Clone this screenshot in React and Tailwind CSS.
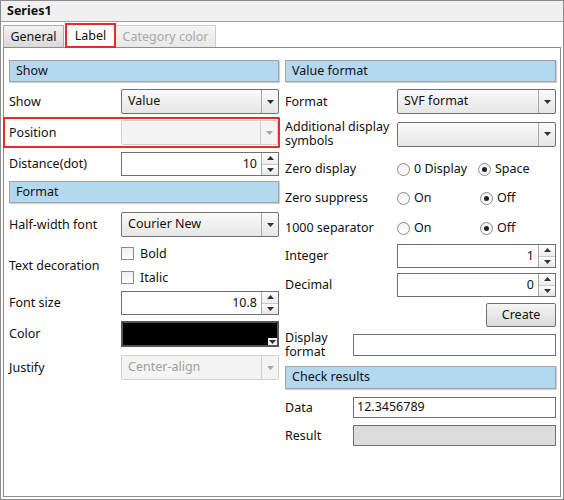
import { useState } from "react";

const font = { fontFamily: '"Noto Sans", "Open Sans", sans-serif' };

// small triangle used on dropdowns and spinners
function Arrow({ up = false, disabled = false }) {
  return (
    <svg width="7" height="4" viewBox="0 0 7 4" className="block">
      <polygon
        points={up ? "0,4 7,4 3.5,0" : "0,0 7,0 3.5,4"}
        fill={disabled ? "#a8a8a8" : "#333"}
      />
    </svg>
  );
}

function Select({ value = "", disabled = false, className = "" }) {
  return (
    <div
      className={`flex h-[25px] flex-1 rounded-[2px] border ${
        disabled
          ? "border-[#d0d0d0] bg-[#f4f4f4] text-[#a0a0a0]"
          : "border-[#707070] bg-gradient-to-b from-[#fafafa] to-[#e6e6e6] text-[#111]"
      } ${className}`}
    >
      <div className="flex flex-1 items-center pl-[6px] text-[12.5px]">{value}</div>
      <div
        className={`flex w-[17px] items-center justify-center border-l ${
          disabled ? "border-[#d0d0d0]" : "border-[#a8a8a8]"
        }`}
      >
        <Arrow disabled={disabled} />
      </div>
    </div>
  );
}

function Spin({ value }) {
  return (
    <div className="flex h-[24px] flex-1 border border-[#707070] bg-white">
      <div className="flex flex-1 items-center justify-end pr-[4px] text-[12.5px] text-[#111]">
        {value}
      </div>
      <div className="flex w-[17px] flex-col border-l border-[#a8a8a8]">
        <div className="flex flex-1 items-center justify-center bg-gradient-to-b from-white to-[#ededed]">
          <Arrow up />
        </div>
        <div className="flex flex-1 items-center justify-center border-t border-[#c8c8c8] bg-gradient-to-b from-white to-[#e6e6e6]">
          <Arrow />
        </div>
      </div>
    </div>
  );
}

function Header({ children, className = "" }) {
  return (
    <div
      className={`flex h-[22px] items-center border border-[#a3a3a3] bg-[#b4d8ef] pl-[6px] text-[12.5px] text-[#111] shadow-[1px_1px_1px_rgba(0,0,0,0.18)] ${className}`}
    >
      {children}
    </div>
  );
}

function Row({ label, children, className = "", labelWidth = "w-[112px]" }) {
  return (
    <div className={`flex items-center ${className}`}>
      <div className={`${labelWidth} shrink-0 text-[12.5px] leading-[14px] text-[#111]`}>{label}</div>
      {children}
    </div>
  );
}

function Radio({ label, checked, width }) {
  return (
    <div className={`flex items-center gap-[4px] ${width}`}>
      <div className="flex h-[13px] w-[13px] items-center justify-center rounded-full border border-[#8a8a8a] bg-gradient-to-b from-[#f0f0f0] to-white">
        {checked && <div className="h-[5px] w-[5px] rounded-full bg-[#222]" />}
      </div>
      <span className="text-[12.5px] text-[#111]">{label}</span>
    </div>
  );
}

function Check({ label }) {
  return (
    <div className="flex h-[13px] items-center gap-[6px]">
      <div className="h-[13px] w-[13px] border border-[#8a8a8a] bg-gradient-to-b from-[#f0f0f0] to-white" />
      <span className="text-[12.5px] leading-[13px] text-[#111]">{label}</span>
    </div>
  );
}

export default function App() {
  const [tab] = useState("Label");

  return (
    <div style={font} className="flex h-[500px] w-[564px] flex-col border border-[#8c8c8c] bg-white">
      {/* title bar */}
      <div className="flex h-[21px] items-center border-b border-[#a0a0a0] bg-[#f0f0f0] pl-[6px] text-[12.5px] font-bold text-[#111]">
        Series1
      </div>

      {/* tabs */}
      <div className="mt-[1px] flex h-[24px] items-end pl-[2px]">
        <div className="flex h-[22px] w-[61px] items-center justify-center border border-b-0 border-[#acacac] bg-gradient-to-b from-[#f2f2f2] to-[#d9d9d9] pt-[1px] text-[12.5px] text-[#111]">
          General
        </div>
        <div
          className={`z-10 -mb-px ml-[1px] flex h-[25px] w-[51px] items-center justify-center border-2 border-[#e82a2a] pt-[2px] text-[12.5px] text-[#111] ${
            tab === "Label" ? "bg-white" : "bg-[#f0f0f0]"
          }`}
        >
          Label
        </div>
        <div className="flex h-[22px] w-[100px] items-center justify-center border border-b-0 border-l-0 border-[#cfcfcf] bg-gradient-to-b from-[#f4f4f4] to-[#e8e8e8] pt-[1px] text-[12.5px] text-[#a8a8a8]">
          Category color
        </div>
      </div>

      {/* panel */}
      <div className="mx-[2px] mb-[2px] flex flex-1 gap-[6px] border border-[#8c8c8c] pl-[5px] pr-[4px] pt-[12px]">
        {/* left column */}
        <div className="flex w-[270px] flex-col">
          <Header>Show</Header>
          <Row label="Show" className="mt-[7px]">
            <Select value="Value" />
          </Row>
          <Row
            label="Position"
            className="-ml-[6px] -mr-[1px] mt-[3px] h-[31px] rounded-[1px] border-2 border-[#e82a2a] pl-[4px]"
          >
            <Select disabled />
          </Row>
          <Row label="Distance(dot)" className="mt-[4px]">
            <Spin value="10" />
          </Row>
          <Header className="mt-[5px]">Format</Header>
          <Row label="Half-width font" className="mt-[9px]">
            <Select value="Courier New" />
          </Row>
          <Row label="Text decoration" className="mt-[10px]">
            <div className="flex flex-col gap-[11px]">
              <Check label="Bold" />
              <Check label="Italic" />
            </div>
          </Row>
          <Row label="Font size" className="mt-[7px]">
            <Spin value="10.8" />
          </Row>
          <Row label="Color" className="mt-[6px]">
            <div className="relative h-[26px] flex-1 border-2 border-[#555] bg-black">
              <div className="absolute bottom-0 right-0 flex h-[7px] w-[9px] items-center justify-center bg-[#f0f0f0]">
                <Arrow />
              </div>
            </div>
          </Row>
          <Row label="Justify" className="mt-[8px]">
            <Select value="Center-align" disabled />
          </Row>
        </div>

        {/* right column */}
        <div className="flex w-[271px] flex-col">
          <Header>Value format</Header>
          <Row label="Format" className="mt-[7px]">
            <Select value="SVF format" />
          </Row>
          <Row label={<>Additional display<br />symbols</>} className="mt-[6px]">
            <Select />
          </Row>
          <Row label="Zero display" className="mt-[10px] h-[22px]">
            <Radio label="0 Display" width="w-[81px]" />
            <Radio label="Space" checked />
          </Row>
          <Row label="Zero suppress" className="mt-[7px] h-[22px]">
            <Radio label="On" width="w-[83px]" />
            <Radio label="Off" checked />
          </Row>
          <Row label="1000 separator" className="mt-[8px] h-[22px]">
            <Radio label="On" width="w-[83px]" />
            <Radio label="Off" checked />
          </Row>
          <Row label="Integer" className="mt-[5px]">
            <Spin value="1" />
          </Row>
          <Row label="Decimal" className="mt-[5px]">
            <Spin value="0" />
          </Row>
          <div className="mt-[6px] flex justify-end">
            <button className="h-[24px] w-[70px] rounded-[2px] border border-[#707070] bg-gradient-to-b from-[#f6f6f6] to-[#dadada] text-[12.5px] text-[#111]">
              Create
            </button>
          </div>
          <Row label={<>Display<br />format</>} labelWidth="w-[68px]" className="mt-[4px]">
            <div className="h-[22px] flex-1 border border-[#707070] bg-white" />
          </Row>
          <Header className="mt-[7px] h-[23px]">Check results</Header>
          <Row label="Data" labelWidth="w-[68px]" className="mt-[8px]">
            <div className="flex h-[21px] flex-1 items-center border border-[#707070] bg-white pl-[3px] text-[12.5px] text-[#111]">
              12.3456789
            </div>
          </Row>
          <Row label="Result" labelWidth="w-[68px]" className="mt-[7px]">
            <div className="h-[21px] flex-1 border border-[#707070] bg-[#dcdcdc]" />
          </Row>
        </div>
      </div>
    </div>
  );
}
